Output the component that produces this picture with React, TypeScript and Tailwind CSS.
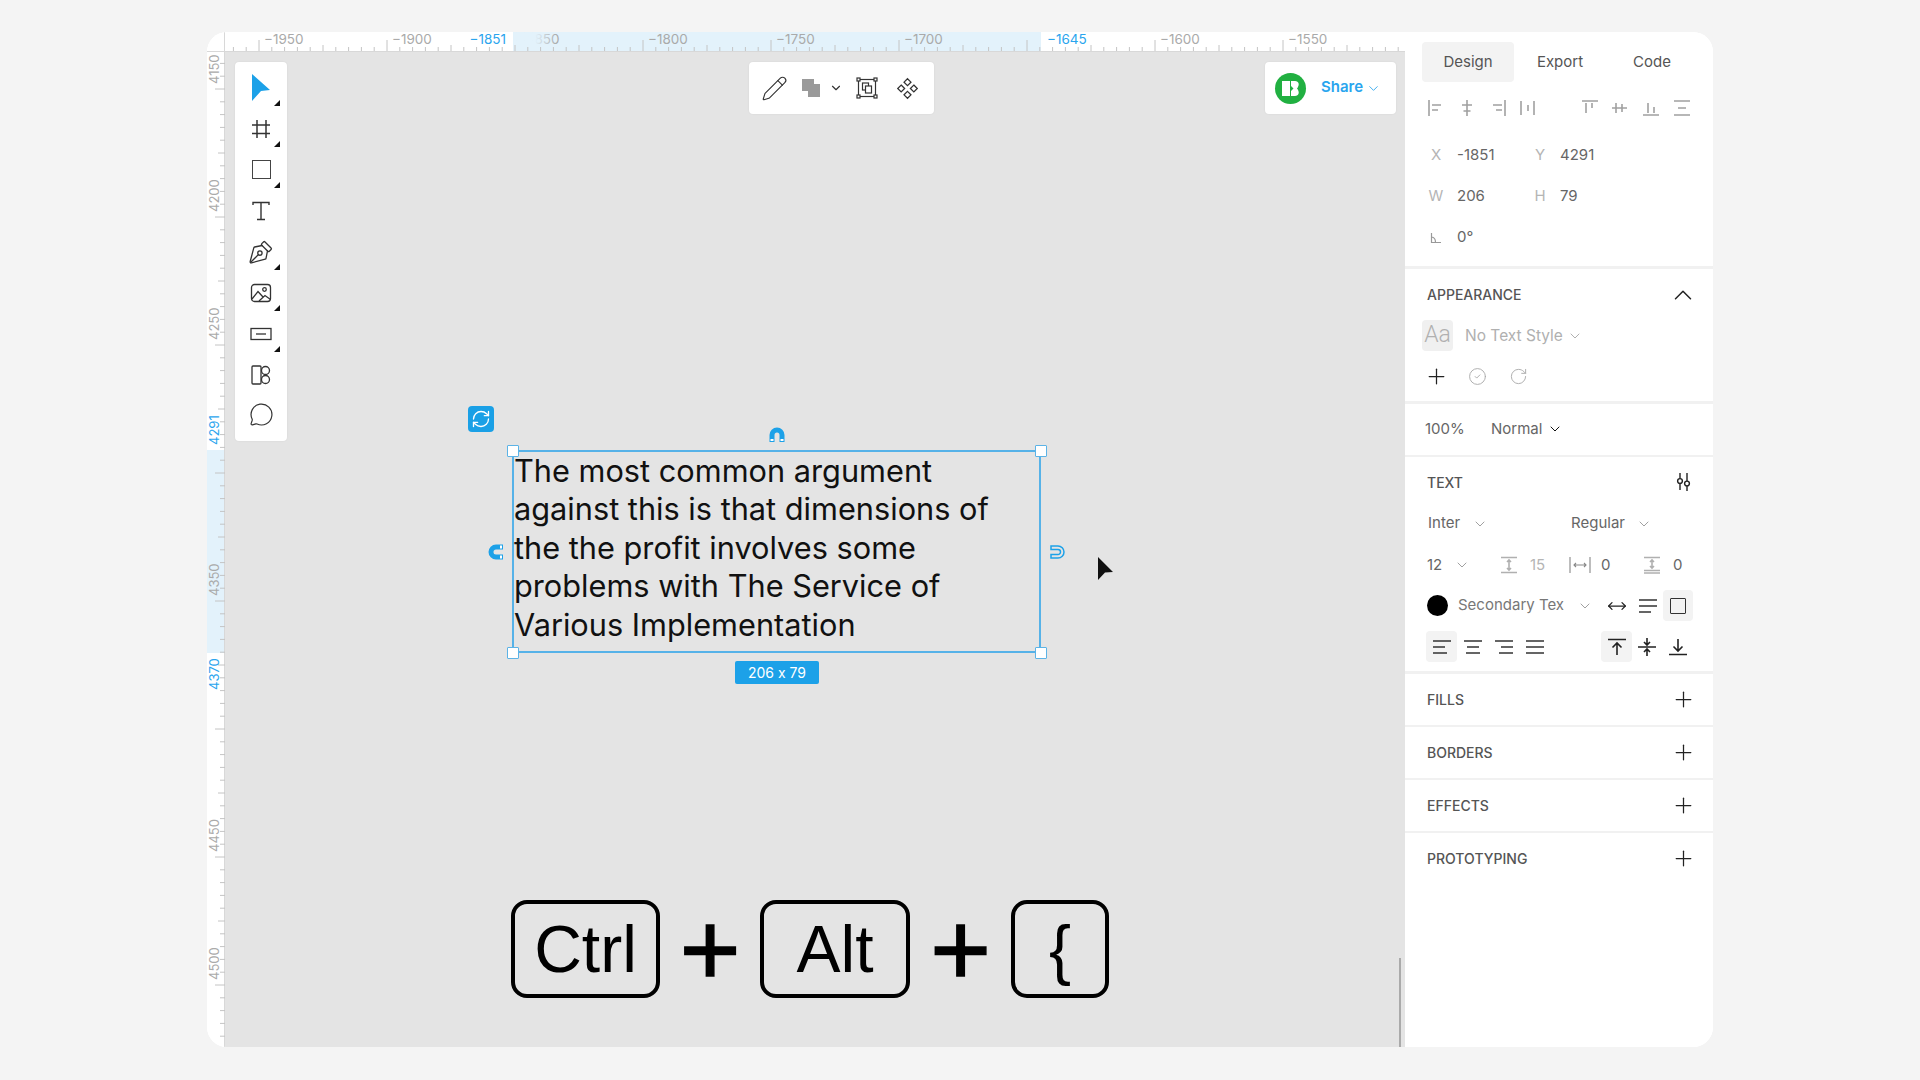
import React from "react";
import { PenTool, MessageCircle, Pencil, RefreshCw, CircleCheck, RotateCw, Plus, ChevronUp, ChevronDown, MoveHorizontal } from "lucide-react";

const Ico = ({ children, size = 18, vb = 18, sw = 1.4, className = "" }: { children: React.ReactNode; size?: number; vb?: number; sw?: number; className?: string }) => (
  <svg width={size} height={size} viewBox={`0 0 ${vb} ${vb}`} fill="none" stroke="currentColor" strokeWidth={sw} className={className}>
    {children}
  </svg>
);

const Corner = () => (
  <svg width="6" height="6" viewBox="0 0 6 6" className="absolute left-[39px] top-[33px]"><path d="M6 0V6H0Z" fill="#111" /></svg>
);

const ToolItem = ({ children, corner }: { children: React.ReactNode; corner?: boolean }) => (
  <div className="relative h-[41px] w-full flex items-center justify-center text-[#333]">
    {children}
    {corner && <Corner />}
  </div>
);

const TopRuler = () => {
  const ticks = Array.from({ length: 94 }, (_, i) => i - 2);
  const labels: [number, string][] = [[34, "−1950"], [162, "−1900"], [290, "−1850"], [418, "−1800"], [546, "−1750"], [674, "−1700"], [930, "−1600"], [1058, "−1550"]];
  return (
    <div className="relative h-[20px] border-b border-[#d8d8d8] bg-white overflow-hidden">
      <div className="absolute left-[288px] top-0 h-full w-[528px] bg-[#e3f2fb]" />
      <svg width="1180" height="20" className="absolute left-0 top-0">
        {ticks.map((k) => {
          const x = 34 + k * 12.8;
          const h = k % 10 === 0 ? 12 : k % 5 === 0 ? 7 : 5;
          return <line key={k} x1={x} x2={x} y1={20 - h} y2={20} stroke="#c4c4c4" strokeWidth="1" />;
        })}
      </svg>
      {labels.map(([x, t]) => (
        <span key={t} className="absolute top-[-1px] text-[13.5px] leading-[16px] text-[#aaaaaa]" style={{ left: x + 5 }}>{t}</span>
      ))}
      <div className="absolute left-[288px] top-0 h-[13px] w-[44px] bg-gradient-to-r from-[#e3f2fb] via-[#e3f2fb] to-[#e3f2fb00]" />
      <span className="absolute left-[236px] w-[52px] top-[-1px] h-[14px] bg-white pr-[7px] text-right text-[13.5px] leading-[16px] text-[#2aa5ee]">−1851</span>
      <span className="absolute left-[816px] w-[48px] top-[-1px] h-[14px] bg-white pl-[6px] text-[13.5px] leading-[16px] text-[#2aa5ee]">−1645</span>
    </div>
  );
};

const V = ({ t, bottom, cls }: { t: string; bottom: number; cls: string }) => (
  <span className={`absolute left-0 w-[14px] [writing-mode:vertical-rl] rotate-180 text-[13px] leading-[14px] ${cls}`} style={{ top: bottom - 34, height: 34 }}>{t}</span>
);

const LeftRuler = () => {
  const ticks = Array.from({ length: 80 }, (_, i) => i - 3);
  return (
    <div className="relative w-[18px] border-r border-[#d8d8d8] bg-white">
      <div className="absolute left-0 top-[398px] w-full h-[203px] bg-[#e3f2fb]" />
      <svg width="18" height="995" className="absolute left-0 top-0">
        {ticks.filter((k) => 37 + k * 12.8 >= 0).map((k) => {
          const y = 37 + k * 12.8;
          const h = k % 10 === 0 ? 10 : k % 5 === 0 ? 7 : 5;
          return <line key={k} x1={18 - h} x2={18} y1={y} y2={y} stroke="#c4c4c4" strokeWidth="1" />;
        })}
      </svg>
      {[["4150", 32], ["4200", 160], ["4250", 288], ["4350", 544], ["4450", 800], ["4500", 928]].map(([t, b]) => (
        <V key={t as string} t={t as string} bottom={b as number} cls="text-[#aaaaaa]" />
      ))}
      <V t="4291" bottom={393} cls="text-[#2aa5ee]" />
      <V t="4370" bottom={638} cls="text-[#2aa5ee]" />
    </div>
  );
};

const Handle = ({ cls }: { cls: string }) => (
  <div className={`absolute w-[12px] h-[12px] bg-white border-[1.5px] border-[#5cb3e6] rounded-[1px] ${cls}`} />
);

const MagnetTop = () => (
  <svg width="16" height="16" viewBox="0 0 16 16">
    <path d="M3 15V8a5 5 0 0 1 10 0v7" fill="none" stroke="#1ca1e8" strokeWidth="5" />
    <rect x="1.5" y="12" width="3" height="2" fill="#fff" />
    <rect x="11.5" y="12" width="3" height="2" fill="#fff" />
  </svg>
);

const Selection = () => (
  <div className="absolute left-[287px] top-[398px] w-[529px] h-[203px] border-[2px] border-[#56b2e8]">
    <div className="text-[30.72px] leading-[38.4px] text-[#111] whitespace-nowrap">
      <div>The most common argument</div>
      <div>against this is that dimensions of</div>
      <div>the the profit involves some</div>
      <div>problems with The Service of</div>
      <div>Various Implementation</div>
    </div>
    <Handle cls="left-[-7px] top-[-7px]" />
    <Handle cls="right-[-8px] top-[-7px]" />
    <Handle cls="left-[-7px] bottom-[-8px]" />
    <Handle cls="right-[-8px] bottom-[-8px]" />
    <div className="absolute left-[221px] top-[209px] w-[84px] h-[23px] rounded-[2px] bg-[#1ca1e8] text-white text-[14px] leading-[23px] text-center [font-feature-settings:'calt'_0]">206 x 79</div>
    <div className="absolute left-[255px] top-[-25px]"><MagnetTop /></div>
    <div className="absolute left-[-26px] top-[92px] -rotate-90"><MagnetTop /></div>
    <div className="absolute left-[536px] top-[92px]">
      <svg width="16" height="16" viewBox="0 0 16 16" fill="none" stroke="#1ca1e8" strokeWidth="1.5">
        <path d="M1 2H8a6 6 0 0 1 0 12H1V10.5H8a2.5 2.5 0 0 0 0-5H1Z" />
      </svg>
    </div>
    <div className="absolute left-[-46px] top-[-46px] w-[26px] h-[26px] rounded-[4px] bg-[#1aa0e6] flex items-center justify-center text-white">
      <RefreshCw size={20} strokeWidth={1.6} />
    </div>
  </div>
);

const Key = ({ t, cls }: { t: string; cls: string }) => (
  <div className={`h-[98px] rounded-[16px] border-[4px] border-black flex items-center justify-center text-[66px] leading-none text-black ${cls}`}>{t}</div>
);
const KeyPlus = ({ cls }: { cls: string }) => (
  <div className={`h-[98px] flex items-center justify-center text-[104px] leading-none text-black [-webkit-text-stroke:1.5px_black] ${cls}`}>+</div>
);

const AlignBtn = ({ children }: { children: React.ReactNode }) => (
  <div className="w-[30.7px] flex items-center justify-center text-[#a0a0a0]">{children}</div>
);

const Lines = ({ d }: { d: string }) => (
  <Ico size={18}><path d={d} strokeWidth="1.6" /></Ico>
);

const BigPlus = ({ cls = "" }: { cls?: string }) => <Plus size={25} strokeWidth={1.2} className={cls} />;

const Header = ({ t }: { t: string }) => (
  <div className="flex items-center justify-between pl-[22px] pr-[16px] h-[51px]">
    <span className="text-[14px] font-medium text-[#555]">{t}</span>
    <div className="w-[28px] flex justify-center text-[#222]"><BigPlus /></div>
  </div>
);

const Field = ({ l, v, vw }: { l: React.ReactNode; v: string; vw: string }) => (
  <div className="flex items-center">
    <span className="text-[15px] text-[#b5b5b5] text-center w-[18px]">{l}</span>
    <span className={`text-[15px] text-[#666] ${vw}`}>{v}</span>
  </div>
);

const Chev = ({ cls = "text-[#999]" }: { cls?: string }) => (
  <span className={`w-[13px] flex justify-center ${cls}`}><ChevronDown size={16} strokeWidth={1.4} className="shrink-0" /></span>
);

const Panel = () => (
  <aside className="w-[308px] h-full bg-white">
    <div className="border-b-[3px] border-[#f1f1f1] h-[237px]">
      <div className="flex pt-[10px] pl-[17px] h-[50px]">
        <div className="w-[92px] h-[40px] rounded-[4px] bg-[#f3f3f3] flex items-center justify-center text-[15px] text-[#555]">Design</div>
        <div className="w-[92px] h-[40px] flex items-center justify-center text-[15px] text-[#555]">Export</div>
        <div className="w-[92px] h-[40px] flex items-center justify-center text-[15px] text-[#555]">Code</div>
      </div>
      <div className="flex items-center h-[53px] pl-[16px] pb-[1px]">
        <AlignBtn><Lines d="M2 1V17M5 6H14M5 11H11" /></AlignBtn>
        <AlignBtn><Lines d="M9 1V17M4 6H14M5.5 12H12.5" /></AlignBtn>
        <AlignBtn><Lines d="M16 1V17M4 6H13M7 11H13" /></AlignBtn>
        <AlignBtn><Lines d="M2 2V16M15 2V16M9 6V12" /></AlignBtn>
        <AlignBtn><span /></AlignBtn>
        <AlignBtn><Lines d="M1 2H17M5 4V14M11 4V9" /></AlignBtn>
        <AlignBtn><Lines d="M1 9H16M5 4V14M11 5V13" /></AlignBtn>
        <AlignBtn><Lines d="M1 16H17M6 4V14M12 8V14" /></AlignBtn>
        <AlignBtn><Lines d="M1 2H17M1 16H17M5 9H13" /></AlignBtn>
      </div>
      <div className="h-[41px] flex items-center pl-[22px]">
        <Field l="X" v="-1851" vw="ml-[12px] w-[74px]" />
        <Field l="Y" v="4291" vw="ml-[11px]" />
      </div>
      <div className="h-[41px] flex items-center pl-[22px]">
        <Field l="W" v="206" vw="ml-[12px] w-[74px]" />
        <Field l="H" v="79" vw="ml-[11px]" />
      </div>
      <div className="h-[41px] flex items-center pl-[22px]">
        <Field l={<svg width="12" height="12" viewBox="0 0 12 12" fill="none" stroke="#999" strokeWidth="1.2" className="inline"><path d="M1.5 1V10.5H11M1.5 5C4 5.2 5.5 7.5 5.5 10.5" /></svg>} v="0°" vw="ml-[12px]" />
      </div>
    </div>

    <div className="border-b-[3px] border-[#f1f1f1] h-[135px]">
      <div className="flex items-center justify-between pl-[22px] pr-[16px] h-[51px]">
        <span className="text-[14px] font-medium text-[#555]">APPEARANCE</span>
        <div className="w-[28px] flex justify-center text-[#222]"><ChevronUp size={30} strokeWidth={1.2} className="shrink-0" /></div>
      </div>
      <div className="flex items-center pl-[17px] h-[31px]">
        <div className="w-[31px] h-[31px] rounded-[4px] bg-[#f0f0f0] flex items-center justify-center text-[23px] text-[#b0b0b0] [font-family:'Roboto',sans-serif] font-light">Aa</div>
        <span className="ml-[12px] text-[15.5px] text-[#b0b0b0]">No Text Style</span>
        <Chev cls="ml-[6px] text-[#aaa]" />
      </div>
      <div className="flex items-center pl-[20px] h-[41px] mt-[5px]">
        <BigPlus cls="text-[#222] -ml-[1px]" />
        <CircleCheck size={19} strokeWidth={1.15} className="ml-[19px] text-[#a8a8a8]" />
        <RotateCw size={19} strokeWidth={1.15} className="ml-[22px] text-[#a8a8a8]" />
      </div>
    </div>

    <div className="border-b-[2px] border-[#f1f1f1] h-[53px] flex items-center pl-[20px] pb-[1px]">
      <span className="text-[15px] text-[#666] w-[66px]">100%</span>
      <span className="text-[15px] text-[#666]">Normal</span>
      <Chev cls="ml-[6px]" />
    </div>

    <div className="border-b-[3px] border-[#f1f1f1] h-[217px]">
      <div className="flex items-center justify-between pl-[22px] pr-[16px] h-[50px]">
        <span className="text-[14px] font-medium text-[#555]">TEXT</span>
        <div className="w-[28px] flex justify-center text-[#222]">
          <Ico size={20} vb={20}><path d="M7 1V6.5M7 11.5V18M14 1V9M14 14V19" /><circle cx="7" cy="9" r="2.4" /><circle cx="14" cy="11.5" r="2.4" /></Ico>
        </div>
      </div>
      <div className="flex items-center h-[41px] mt-[-4px] pl-[23px]">
        <span className="text-[15px] text-[#666] w-[45px]">Inter</span>
        <Chev />
        <span className="ml-[85px] w-[66px] text-[15px] text-[#666]">Regular</span>
        <Chev />
      </div>
      <div className="flex items-center h-[41px] pl-[22px] pt-[1px]">
        <span className="text-[15px] text-[#666] w-[28px]">12</span>
        <Chev />
        <div className="ml-[32px] text-[#b0b0b0] w-[18px]"><Lines d="M1 1.5H17M1 16.5H17M9 4V14M7 6L9 4L11 6M7 12L9 14L11 12" /></div>
        <span className="ml-[12px] text-[15px] text-[#b5b5b5] w-[26px]">15</span>
        <div className="ml-[13px] text-[#888] w-[22px]">
          <Ico size={22} vb={22} sw={1.1}><path d="M1 3V19M21 3V19M5 11H17M7 9L5 11L7 13M15 9L17 11L15 13" /></Ico>
        </div>
        <span className="ml-[10px] text-[15px] text-[#666] w-[25px]">0</span>
        <div className="ml-[17px] text-[#b0b0b0] w-[18px]"><Lines d="M1 1.5H17M1 14.5H17M1 17H17M9 4V12M7 6L9 4L11 6M7 10L9 12L11 10" /></div>
        <span className="ml-[12px] text-[15px] text-[#666]">0</span>
      </div>
      <div className="flex items-center h-[41px] pl-[22px]">
        <div className="w-[21px] h-[21px] rounded-full bg-black" />
        <span className="ml-[10px] text-[15px] text-[#777] w-[119px] whitespace-nowrap overflow-hidden">Secondary Tex</span>
        <Chev cls="ml-[1px] text-[#999]" />
        <MoveHorizontal size={20} strokeWidth={1.5} className="ml-[16px] text-[#222]" />
        <div className="ml-[11px] w-[20px] text-[#333]"><Ico size={20} vb={20} sw={1.5}><path d="M1 4H19M1 10H19M1 16H13" /></Ico></div>
        <div className="ml-[5px] w-[30px] h-[31px] rounded-[4px] bg-[#f3f3f3] flex items-center justify-center">
          <div className="w-[16px] h-[16px] border-[1.5px] border-[#333] rounded-[1px]" />
        </div>
      </div>
      <div className="flex items-center h-[41px] pl-[21px]">
        <div className="w-[31px] h-[31px] rounded-[4px] bg-[#f3f3f3] flex items-center justify-center text-[#333]"><Lines d="M0 3H18M0 9H12M0 15H14" /></div>
        <div className="w-[31px] flex justify-center text-[#333]"><Lines d="M0 3H18M3 9H15M2 15H16" /></div>
        <div className="w-[31px] flex justify-center text-[#333]"><Lines d="M0 3H18M6 9H18M4 15H18" /></div>
        <div className="w-[31px] flex justify-center text-[#333]"><Lines d="M0 3H18M0 9H18M0 15H18" /></div>
        <div className="ml-[51px] w-[31px] h-[31px] rounded-[4px] bg-[#f3f3f3] flex items-center justify-center text-[#222]"><Lines d="M0 1.5H18M9 17V5M4.5 9.5L9 5L13.5 9.5" /></div>
        <div className="w-[30px] flex justify-center text-[#222]"><Lines d="M0 9H18M9 0V6.5M6 4L9 7L12 4M9 18V11.5M6 14L9 11L12 14" /></div>
        <div className="w-[31px] flex justify-center text-[#222]"><Lines d="M0 16.5H18M9 1V13M4.5 8.5L9 13L13.5 8.5" /></div>
      </div>
    </div>

    <div className="border-b-[2px] border-[#f1f1f1]"><Header t="FILLS" /></div>
    <div className="border-b-[2px] border-[#f1f1f1]"><Header t="BORDERS" /></div>
    <div className="border-b-[2px] border-[#f1f1f1]"><Header t="EFFECTS" /></div>
    <Header t="PROTOTYPING" />
  </aside>
);

export default function App() {
  return (
    <div className="w-[1920px] h-[1080px] bg-[#f4f4f4] pt-[32px] pl-[207px] [font-family:'Inter',sans-serif]">
      <div className="flex w-[1506px] h-[1015px] rounded-[20px] overflow-hidden bg-white">
        <div className="w-[1198px] h-full grid grid-cols-[18px_1fr] grid-rows-[20px_1fr]">
          <div className="bg-white border-b border-r border-[#d8d8d8]" />
          <TopRuler />
          <LeftRuler />
          <div className="relative bg-[#e4e4e4] overflow-hidden">
            {/* left toolbar */}
            <div className="absolute left-[10px] top-[10px] w-[52px] h-[379px] pt-[5px] rounded-[4px] bg-white shadow-[0_0_2px_rgba(0,0,0,0.08)] flex flex-col">
              <ToolItem corner>
                <svg width="24" height="28" viewBox="0 0 24 28"><path d="M3 0L21 16L12 17L3 27Z" fill="#1ca1e8" /></svg>
              </ToolItem>
              <ToolItem corner>
                <Ico size={20} vb={20} sw={1.5}><path d="M6 1V19M15 1V19M1 6H19M1 14.5H19" /></Ico>
              </ToolItem>
              <ToolItem corner><div className="w-[19px] h-[19px] border-[1.5px] border-[#444]" /></ToolItem>
              <ToolItem>
                <Ico size={22} vb={22} sw={1.4}><path d="M3 5V2.5H19V5M11 2.5V19.5M7 19.5H15" /></Ico>
              </ToolItem>
              <ToolItem corner><PenTool size={26} strokeWidth={1.2} className="-rotate-90" /></ToolItem>
              <ToolItem corner>
                <Ico size={22} vb={22} sw={1.3}><rect x="1.5" y="2.5" width="19" height="17" rx="3" /><circle cx="14.5" cy="7.5" r="1.8" /><path d="M2 17L8 9.5L13 15M9 19L15 13.5L20.5 17.5" /></Ico>
              </ToolItem>
              <ToolItem corner>
                <Ico size={22} vb={22} sw={1.3}><rect x="1" y="5.5" width="20" height="11" /><path d="M6 11H16" /></Ico>
              </ToolItem>
              <ToolItem>
                <Ico size={22} vb={22} sw={1.3}><rect x="2" y="2" width="9" height="18" rx="1" /><circle cx="15.5" cy="6.5" r="4" /><circle cx="15.5" cy="15.5" r="4" /></Ico>
              </ToolItem>
              <ToolItem><MessageCircle size={25} strokeWidth={1.15} className="-mt-[2px]" /></ToolItem>
            </div>

            {/* top middle toolbar */}
            <div className="absolute left-[524px] top-[10px] w-[185px] h-[52px] pl-[10px] rounded-[4px] bg-white shadow-[0_0_2px_rgba(0,0,0,0.08)] flex items-center">
              <div className="w-[30px] flex justify-center text-[#333]"><Pencil size={27} strokeWidth={1} className="shrink-0" /></div>
              <div className="ml-[2px] w-[40px] flex justify-center">
                <svg width="18" height="18" viewBox="0 0 18 18"><path d="M0 0H12V5H18V18H6V12H0Z" fill="#9a9a9a" /></svg>
              </div>
              <div className="w-[10px] flex justify-center text-[#333]"><ChevronDown size={14} strokeWidth={2} className="shrink-0" /></div>
              <div className="w-[52px] flex justify-center text-[#333]">
                <Ico size={22} vb={22} sw={1.2}><rect x="2.5" y="2.5" width="17" height="17" /><rect x="1" y="1" width="3" height="3" fill="#fff" /><rect x="18" y="1" width="3" height="3" fill="#fff" /><rect x="1" y="18" width="3" height="3" fill="#fff" /><rect x="18" y="18" width="3" height="3" fill="#fff" /><rect x="6.5" y="6" width="6" height="7" /><rect x="9.5" y="9" width="6" height="7" fill="#fff" /></Ico>
              </div>
              <div className="w-[28px] flex justify-center text-[#333]">
                <Ico size={23} vb={20} sw={1.1} className="shrink-0"><path d="M10 1.5L13 4.5L10 7.5L7 4.5ZM10 12.5L13 15.5L10 18.5L7 15.5ZM4.5 7L7.5 10L4.5 13L1.5 10ZM15.5 7L18.5 10L15.5 13L12.5 10Z" /></Ico>
              </div>
            </div>

            {/* share */}
            <div className="absolute left-[1040px] top-[10px] w-[131px] h-[52px] pl-[10px] rounded-[4px] bg-white shadow-[0_0_2px_rgba(0,0,0,0.08)] flex items-center">
              <div className="w-[31px] h-[31px] rounded-full bg-[#21b041] flex items-center justify-center">
                <svg width="19" height="17" viewBox="0 0 19 17"><path d="M1 1H9V16H1ZM10 1H14C18 1 19 5 16 8.5C19 12 18 16 14 16H10V11L12.5 8.5L10 6Z" fill="#fff" /></svg>
              </div>
              <span className="ml-[15px] text-[15px] font-semibold text-[#2aa5ee] -mt-[1px]">Share</span>
              <ChevronDown size={15} strokeWidth={1.4} className="ml-[3px] text-[#2aa5ee]" />
            </div>

            <Selection />

            {/* cursor */}
            <svg width="16" height="24" viewBox="0 0 16 24" className="absolute left-[873px] top-[505px]"><path d="M0 0L15 15L7 15.5L0 23Z" fill="#111" /></svg>

            {/* shortcut keys */}
            <div className="absolute left-[286px] top-[848px] flex [font-family:'Liberation_Sans',Arial,sans-serif]">
              <Key t="Ctrl" cls="w-[149px]" />
              <KeyPlus cls="w-[100px]" />
              <Key t="Alt" cls="w-[150px]" />
              <KeyPlus cls="w-[101px]" />
              <Key t="{" cls="w-[98px]" />
            </div>

            {/* scrollbar */}
            <div className="absolute left-[1174px] top-[906px] bottom-0 w-[2px] bg-[#aaaaaa]" />
          </div>
        </div>
        <Panel />
      </div>
    </div>
  );
}
